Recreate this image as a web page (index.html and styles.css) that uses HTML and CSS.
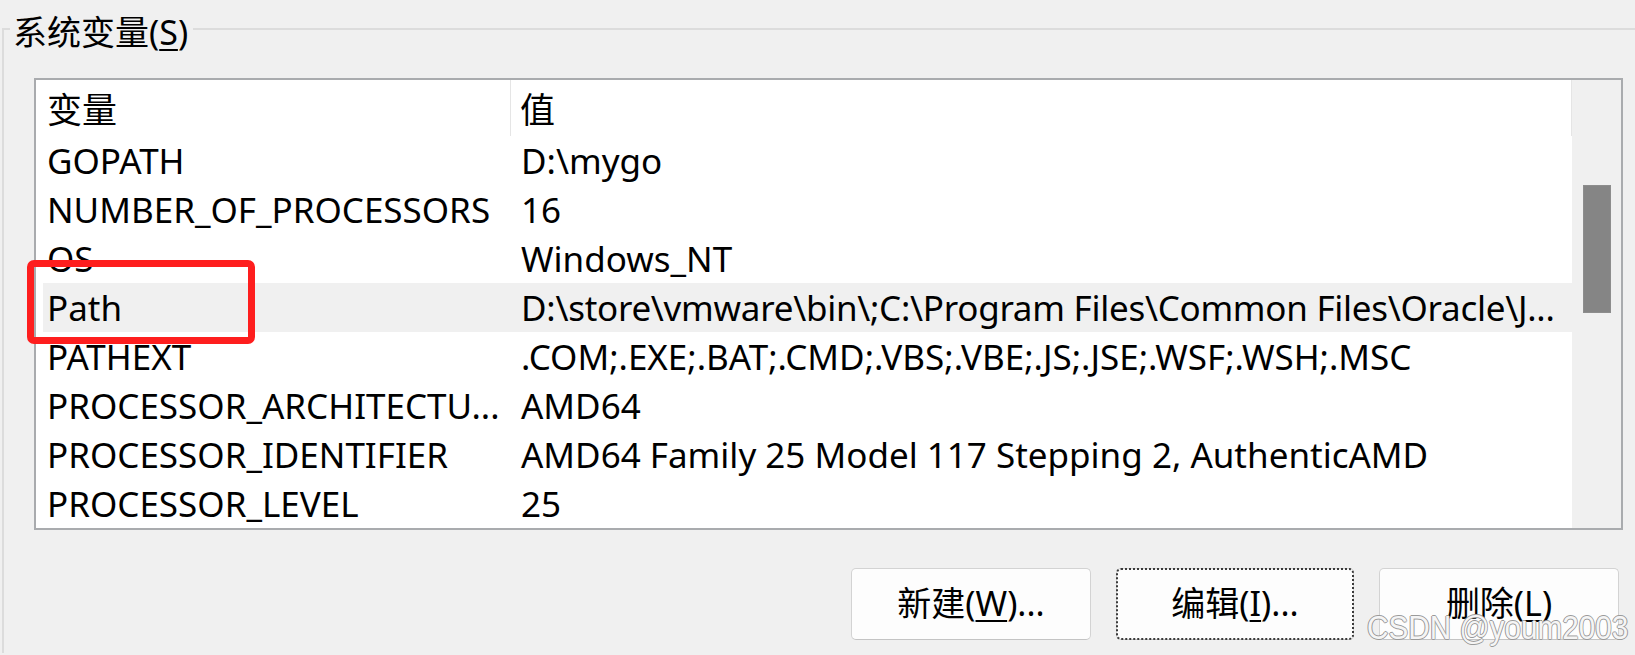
FILE: index.html
```html
<!DOCTYPE html>
<html lang="zh-CN">
<head>
<meta charset="utf-8">
<title>系统变量</title>
<link rel="stylesheet" href="styles.css">
</head>
<body>
<div class="group">
  <div class="group-title">系统变量(<u>S</u>)</div>
  <div class="list">
    <div class="list-main">
      <div class="row header"><div class="c1">变量</div><div class="c2">值</div></div>
      <div class="row"><div class="c1">GOPATH</div><div class="c2">D:\mygo</div></div>
      <div class="row"><div class="c1">NUMBER_OF_PROCESSORS</div><div class="c2">16</div></div>
      <div class="row"><div class="c1">OS</div><div class="c2">Windows_NT</div></div>
      <div class="row selected"><div class="c1">Path</div><div class="c2 tight">D:\store\vmware\bin\;C:\Program Files\Common Files\Oracle\J...</div></div>
      <div class="row"><div class="c1">PATHEXT</div><div class="c2">.COM;.EXE;.BAT;.CMD;.VBS;.VBE;.JS;.JSE;.WSF;.WSH;.MSC</div></div>
      <div class="row"><div class="c1">PROCESSOR_ARCHITECTU...</div><div class="c2">AMD64</div></div>
      <div class="row"><div class="c1">PROCESSOR_IDENTIFIER</div><div class="c2">AMD64 Family 25 Model 117 Stepping 2, AuthenticAMD</div></div>
      <div class="row"><div class="c1">PROCESSOR_LEVEL</div><div class="c2">25</div></div>
    </div>
    <div class="scrollbar"><div class="thumb"></div></div>
  </div>
  <div class="buttons">
    <div class="btn">新建(<u>W</u>)...</div>
    <div class="btn focused">编辑(<u>I</u>)...</div>
    <div class="btn">删除(<u>L</u>)</div>
  </div>
</div>
<div class="redbox"></div>
<div class="watermark">CSDN @youm2003</div>
</body>
</html>
```
FILE: styles.css
```css
html, body {
  margin: 0;
  padding: 0;
  overflow: hidden;
}
body {
  width: 1635px;
  height: 655px;
  background: #f0f0f0;
  font-family: "Noto Sans", "Noto Sans CJK SC", sans-serif;
  font-size: 35px;
  color: #000;
  position: relative;
}
u {
  text-decoration-thickness: 2px;
  text-underline-offset: 4px;
}
.group {
  margin: 28px 0 0 2px;
  border-top: 2px solid #dcdcdc;
  border-left: 2px solid #dcdcdc;
  height: 625px;
  box-sizing: border-box;
}
.group-title {
  display: block;
  width: max-content;
  margin: -18px 0 0 6px;
  padding: 0 5px 0 3px;
  height: 40px;
  line-height: 40px;
  font-size: 34px;
  background: #f0f0f0;
}
.list {
  display: flex;
  margin: 26px 0 0 30px;
  width: 1589px;
  height: 452px;
  box-sizing: border-box;
  border: 2px solid #a9abae;
  background: #fff;
}
.list-main {
  width: 1536px;
  height: 448px;
  overflow: hidden;
}
.row {
  display: flex;
  height: 49px;
  line-height: 49px;
  margin-left: 7px;
  white-space: nowrap;
  overflow: hidden;
}
.row .c1 {
  width: 468px;
  box-sizing: border-box;
  padding-left: 4px;
  flex: none;
  overflow: hidden;
}
.row .c2 {
  flex: 1;
  padding-left: 10px;
  overflow: hidden;
}
.row .c2.tight {
  letter-spacing: -0.27px;
}
.row.header {
  height: 56px;
  line-height: 52px;
  margin-left: 0;
}
.row.header .c1 {
  width: 475px;
  padding-left: 11px;
  padding-top: 4px;
  border-right: 1px solid #e5e5e5;
}
.row.header .c2 {
  padding-left: 9px;
  padding-top: 4px;
  border-right: 1px solid #e5e5e5;
}
.row.selected {
  background: #f0f0f0;
}
.scrollbar {
  width: 49px;
  height: 448px;
  background: #f0f0f0;
  flex: none;
  box-sizing: border-box;
  padding: 105px 0 0 11px;
}
.thumb {
  width: 28px;
  height: 128px;
  background: #858585;
  box-sizing: border-box;
  border: 1px solid #8d8d8d;
}
.buttons {
  display: flex;
  justify-content: flex-end;
  gap: 25px;
  margin-top: 38px;
  padding-right: 16px;
}
.btn {
  width: 240px;
  height: 72px;
  box-sizing: border-box;
  border: 1px solid #d3d3d3;
  border-bottom-color: #c4c4c4;
  border-radius: 5px;
  background: #fdfdfd;
  text-align: center;
  line-height: 68px;
  font-size: 34px;
}
.btn.focused {
  width: 238px;
  outline: 2px dotted #3a3a3a;
  outline-offset: -2px;
}
.redbox {
  position: absolute;
  left: 27px;
  top: 260px;
  width: 228px;
  height: 84px;
  box-sizing: border-box;
  border: 7px solid #fe1e1e;
  border-radius: 7px;
}
.watermark {
  position: absolute;
  left: 1367px;
  top: 611px;
  font-family: "Liberation Sans", Arial, sans-serif;
  font-size: 33px;
  line-height: 33px;
  white-space: nowrap;
  color: rgba(255, 255, 255, 0.92);
  text-shadow: 1px 0 #9a9a9a, -1px 0 #9a9a9a, 0 1px #9a9a9a, 0 -1px #9a9a9a;
  transform: scaleX(0.9);
  transform-origin: left top;
}
```
